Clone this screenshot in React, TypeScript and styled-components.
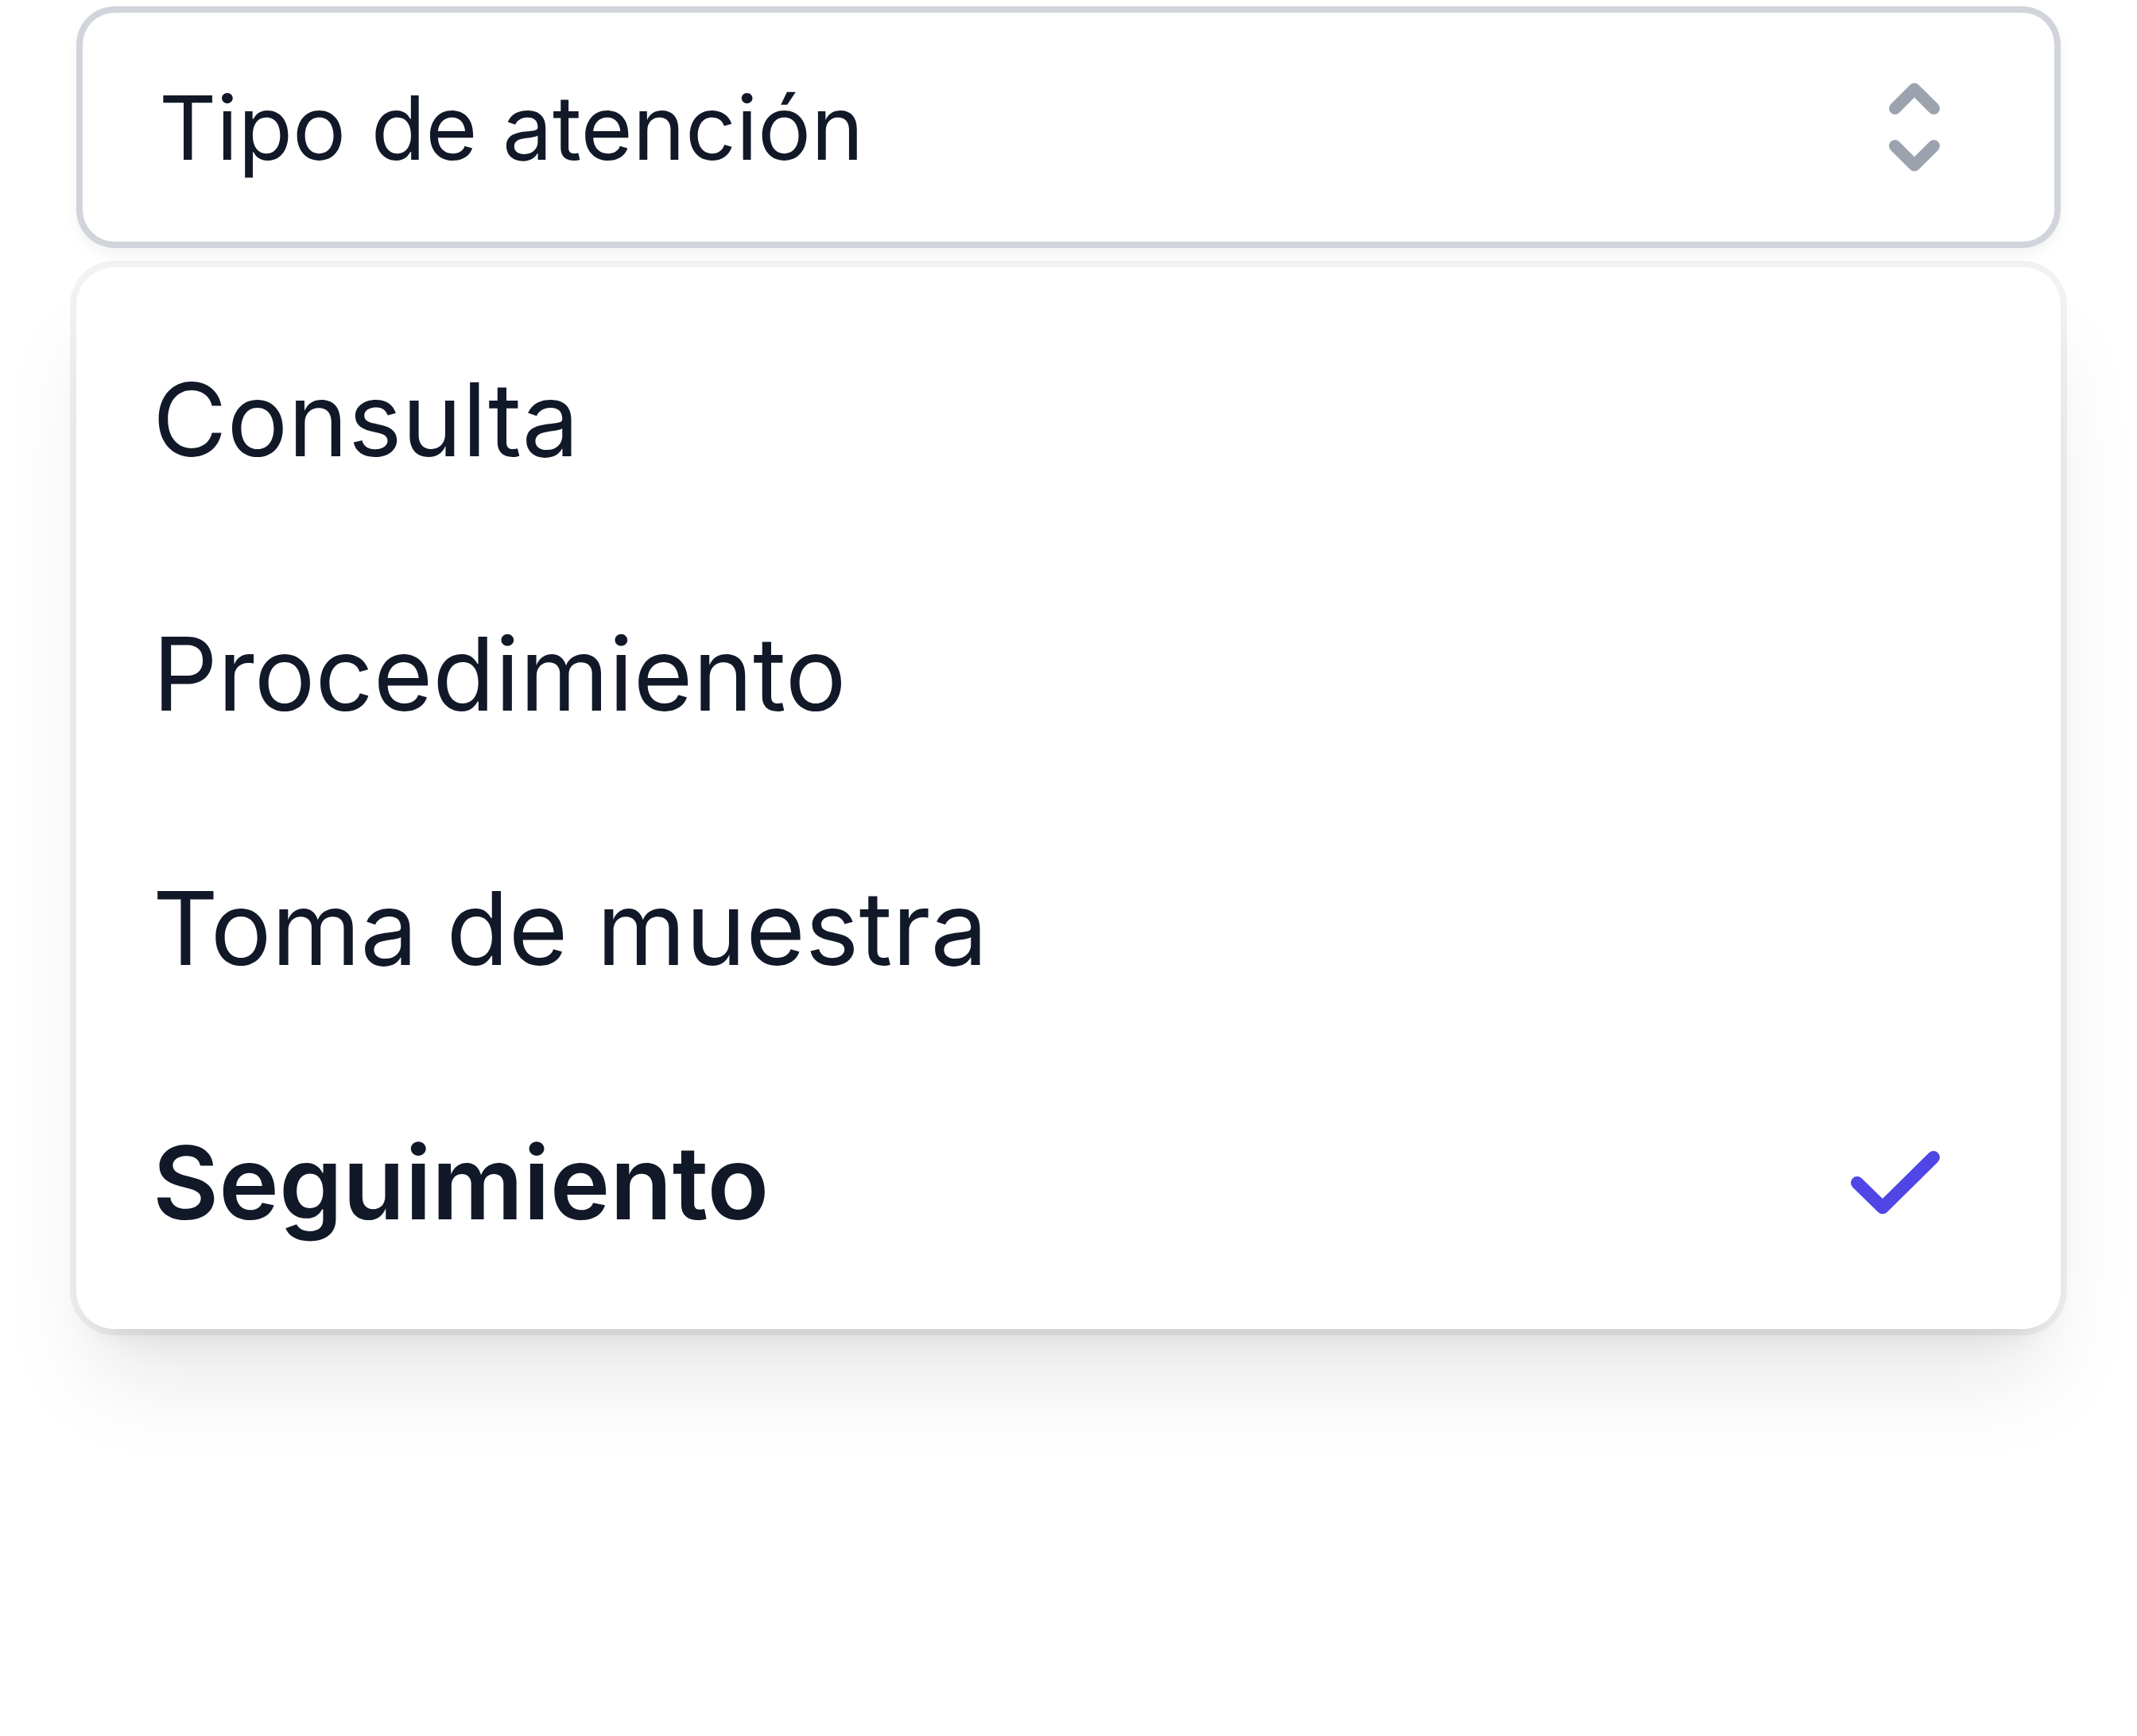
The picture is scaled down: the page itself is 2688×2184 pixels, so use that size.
import React, { useState } from 'react';
import styled, { createGlobalStyle } from 'styled-components';

const TEXT_COLOR = '#111827';
const ICON_GRAY = '#9ca3af';
const BORDER_GRAY = '#d1d5db';
const INDIGO = '#4f46e5';

const GlobalStyle = createGlobalStyle`
  html, body {
    margin: 0;
    padding: 0;
    background: #ffffff;
  }
  body {
    font-family: Inter, "Noto Sans", "Liberation Sans", sans-serif;
    color: ${TEXT_COLOR};
  }
`;

const Page = styled.div`
  width: 2688px;
  min-height: 2184px;
  padding: 8px 96px 0;
  box-sizing: border-box;
`;

const Field = styled.div`
  display: flex;
  flex-direction: column;
  gap: 24px;
  width: 2496px;
`;

const Trigger = styled.button`
  display: flex;
  align-items: center;
  justify-content: space-between;
  height: 304px;
  padding: 0 104px 0 104px;
  border: none;
  border-radius: 48px;
  background: #ffffff;
  box-shadow: inset 0 0 0 8px ${BORDER_GRAY}, 0 8px 16px 0 rgba(0, 0, 0, 0.05);
  font-family: inherit;
  font-size: 112px;
  line-height: 192px;
  color: ${TEXT_COLOR};
  text-align: left;
  cursor: pointer;
`;

const Panel = styled.ul`
  list-style: none;
  margin: 0;
  padding: 32px 0 24px;
  border-radius: 48px;
  background: #ffffff;
  box-shadow: 0 0 0 8px rgba(0, 0, 0, 0.05), 0 80px 120px -24px rgba(0, 0, 0, 0.1),
    0 32px 48px -32px rgba(0, 0, 0, 0.1);
`;

const Option = styled.li<{ selected?: boolean }>`
  display: flex;
  align-items: center;
  justify-content: space-between;
  height: 320px;
  padding: 0 128px 0 96px;
  font-size: 128px;
  line-height: 192px;
  font-weight: ${(p) => (p.selected ? 600 : 400)};
  color: ${TEXT_COLOR};
  cursor: default;
`;

function ChevronUpDown() {
  return (
    <svg width="160" height="160" viewBox="0 0 20 20" fill="none" aria-hidden="true">
      <path
        d="M6.95 7.05 10 4l3.05 3.05M6.95 12.95 10 16l3.05-3.05"
        stroke={ICON_GRAY}
        strokeWidth="1.9"
        strokeLinecap="round"
        strokeLinejoin="round"
      />
    </svg>
  );
}

function Check() {
  return (
    <svg width="160" height="160" viewBox="0 0 20 20" fill="none" aria-hidden="true">
      <path
        d="M4 10l4 3.9L16 6"
        stroke={INDIGO}
        strokeWidth="2"
        strokeLinecap="round"
        strokeLinejoin="round"
      />
    </svg>
  );
}

const options = ['Consulta', 'Procedimiento', 'Toma de muestra', 'Seguimiento'];

export default function App() {
  const [selected, setSelected] = useState('Seguimiento');

  return (
    <>
      <GlobalStyle />
      <Page>
        <Field>
          <Trigger type="button">
            <span>Tipo de atención</span>
            <ChevronUpDown />
          </Trigger>
          <Panel>
            {options.map((opt) => (
              <Option key={opt} selected={opt === selected} onClick={() => setSelected(opt)}>
                <span>{opt}</span>
                {opt === selected && <Check />}
              </Option>
            ))}
          </Panel>
        </Field>
      </Page>
    </>
  );
}
